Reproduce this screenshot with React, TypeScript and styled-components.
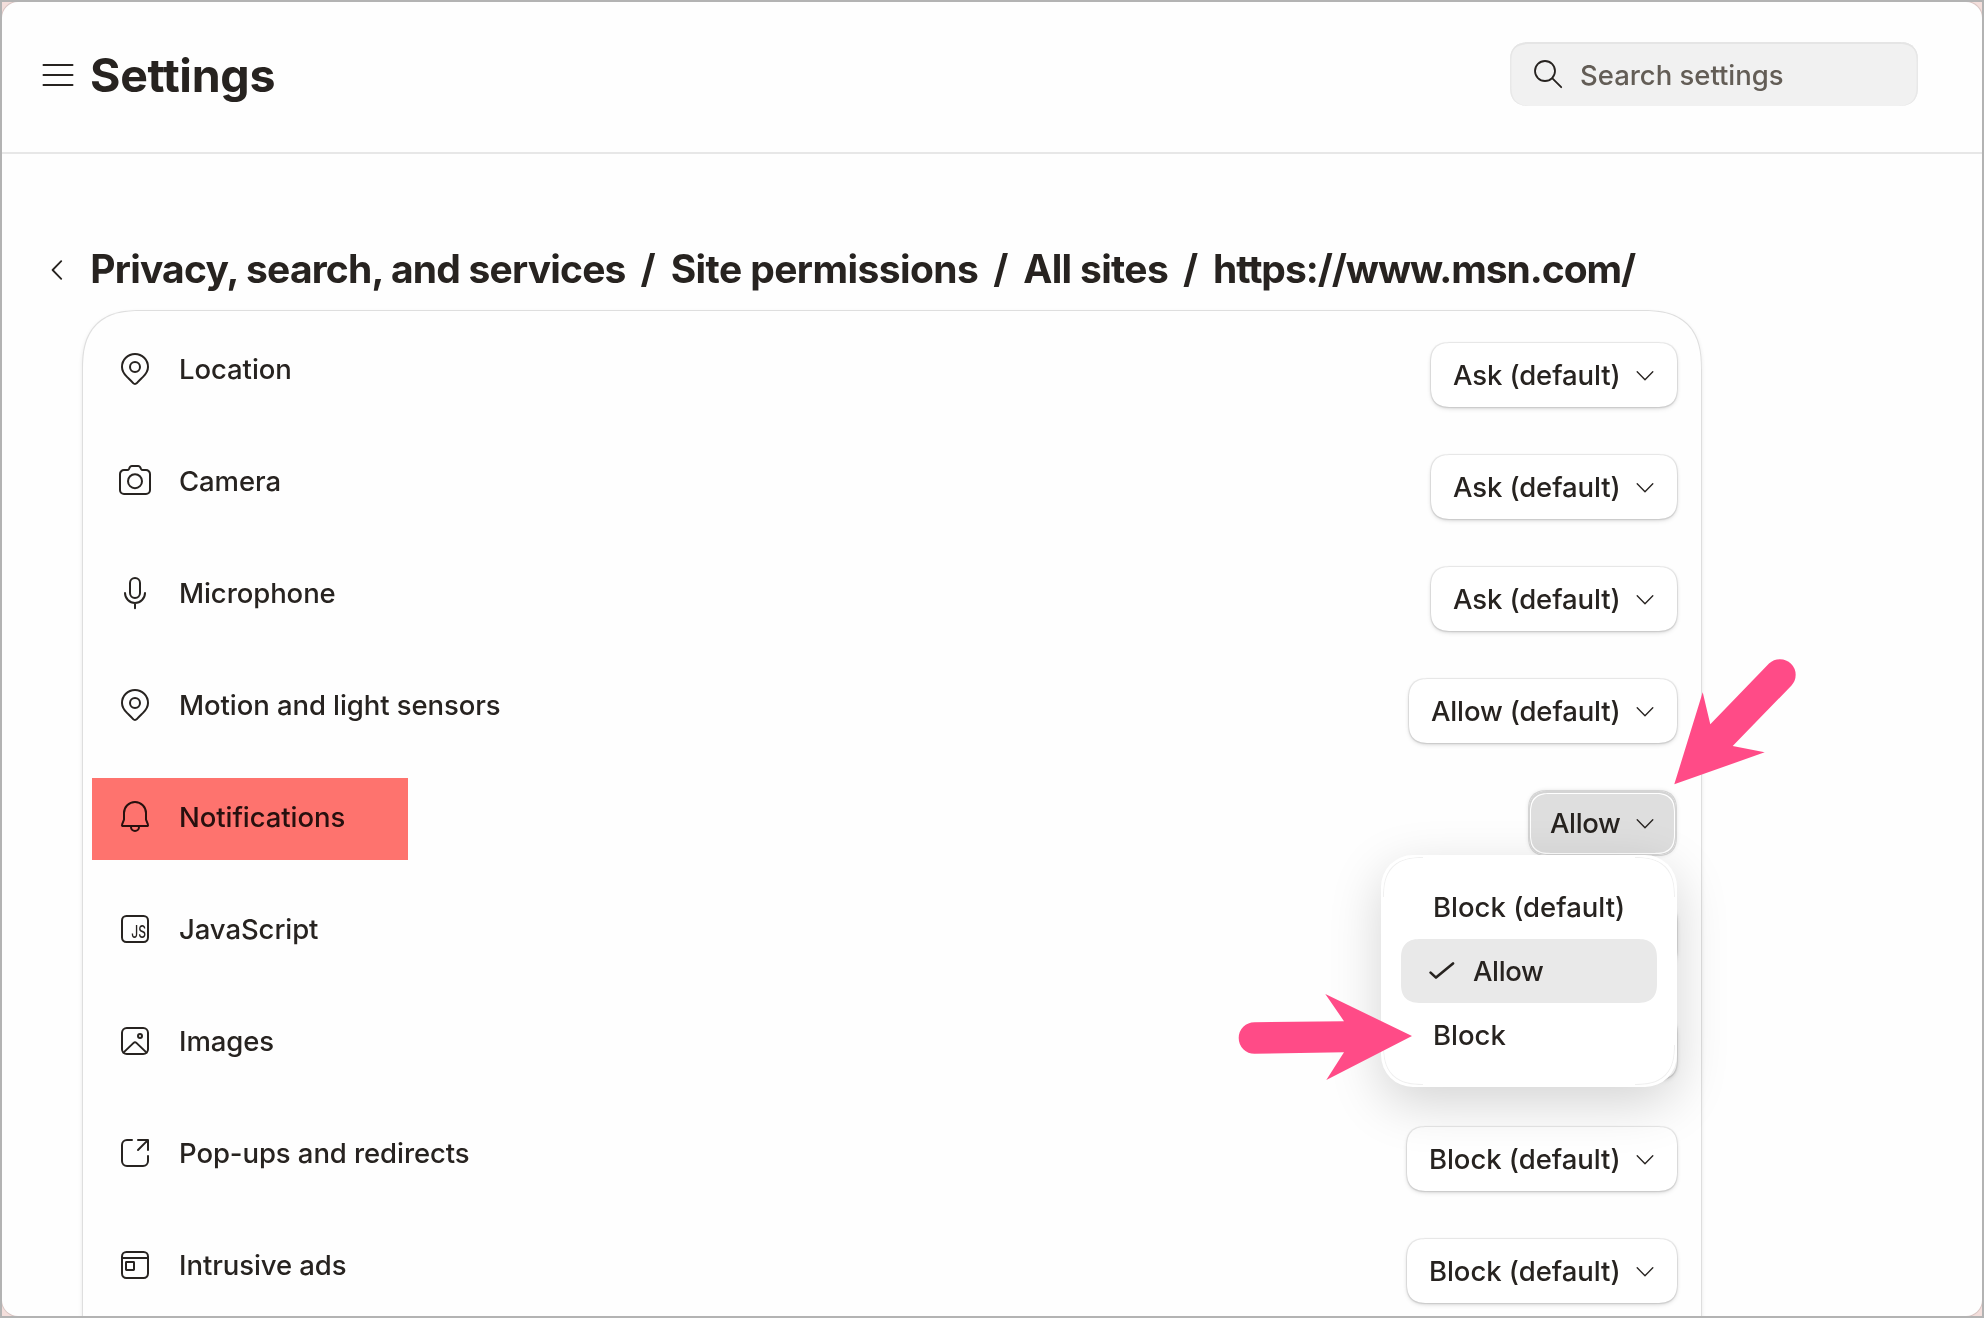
import React from 'react';
import styled, { createGlobalStyle, css } from 'styled-components';

const ink = '#272320';

const smoothCorner = css`
  corner-shape: superellipse(1.38);
`;

const GlobalStyle = createGlobalStyle`
  *, *::before, *::after { box-sizing: border-box; }
  body {
    margin: 0;
    font-family: Inter, "Liberation Sans", sans-serif;
    font-weight: 500;
    color: ${ink};
    overflow: hidden;
  }
`;

const Frame = styled.div`
  position: relative;
  width: 1984px;
  height: 1318px;
  border: 2px solid #b3b3b3;
  background: #f4dfdc;
  overflow: hidden;
`;

const Page = styled.div`
  display: flex;
  flex-direction: column;
  height: 100%;
  border-radius: 16px;
  background: #fefefe;
  box-shadow: 0 0 0 1px #d9c6c4;
  overflow: hidden;
`;

const Header = styled.header`
  flex: none;
  display: flex;
  align-items: center;
  height: 152px;
  padding: 0 64px 6px 40px;
  border-bottom: 2px solid #e7e7e7;
`;

const MenuButton = styled.div`
  flex: none;
  margin-top: 2px;
`;

const Title = styled.h1`
  flex: 1;
  margin: 1px 0 0 16px;
  font-size: 46.5px;
  font-weight: 700;
  line-height: 56px;
  letter-spacing: -0.3px;
`;

const SearchBox = styled.div`
  display: flex;
  align-items: center;
  gap: 12px;
  width: 408px;
  height: 64px;
  padding-left: 18px;
  border-radius: 20px;
  ${smoothCorner}
  background: #f1f1f1;
  box-shadow: inset 0 2px 0 #e5e5e5, inset 1.5px 0 0 #e8e8e8, inset -1.5px 0 0 #e8e8e8;
`;

const SearchText = styled.span`
  padding-top: 1px;
  font-size: 27.5px;
  letter-spacing: -0.02px;
  color: #635d56;
`;

const Stroke = styled.svg<{ $w: number; $h: number }>`
  flex: none;
  display: block;
  width: ${(p) => p.$w}px;
  height: ${(p) => p.$h}px;
  fill: none;
  stroke: currentColor;
  stroke-linecap: round;
  stroke-linejoin: round;
`;

const Breadcrumb = styled.nav`
  flex: none;
  display: flex;
  align-items: center;
  height: 48px;
  margin-top: 91px;
  padding-left: 48px;
  font-size: 39px;
  font-weight: 700;
  line-height: 48px;
`;

const Crumb = styled.span<{ $tracking: number; $first?: boolean }>`
  margin-left: ${(p) => (p.$first ? 24.3 : 0)}px;
  letter-spacing: ${(p) => p.$tracking}px;
  white-space: nowrap;
`;

const Separator = styled.span`
  width: 45px;
  text-align: center;
`;

const Card = styled.section`
  flex: none;
  width: 1620px;
  height: 1100px;
  margin: 17px 0 0 80px;
  padding: 0 25px 0 32px;
  border: 1px solid #dedede;
  border-radius: 60px;
  ${smoothCorner}
  background: #fefefe;
  box-shadow: 0 2px 4px rgba(0, 0, 0, 0.09);
`;

const Row = styled.div`
  display: flex;
  justify-content: space-between;
  align-items: flex-start;
  height: 112px;
  padding-top: 32px;
`;

const Label = styled.div<{ $marked?: boolean }>`
  position: relative;
  display: flex;
  align-items: center;
  gap: 24px;
  height: 40px;
  margin-top: 6px;
  font-size: 27.5px;
  letter-spacing: -0.08px;
  white-space: nowrap;
  ${(p) =>
    p.$marked &&
    css`
      &::after {
        content: '';
        position: absolute;
        left: -23px;
        top: -19px;
        width: 316px;
        height: 82px;
        background: #ff736e;
        mix-blend-mode: multiply;
      }
    `}
`;

const SelectWrap = styled.div`
  position: relative;
`;

const Select = styled.button<{ $open?: boolean; $tracking: number; $width?: number }>`
  display: flex;
  align-items: center;
  justify-content: flex-end;
  gap: 14.5px;
  width: ${(p) => (p.$width ? `${p.$width}px` : 'auto')};
  height: 64px;
  margin-right: ${(p) => (p.$open ? 0 : -0.5)}px;
  padding: ${(p) => (p.$open ? '0 21px' : '0 21.5px 0 22px')};
  border: 0;
  border-radius: 20px;
  ${smoothCorner}
  font: inherit;
  font-size: 27.5px;
  letter-spacing: ${(p) => p.$tracking}px;
  color: ${ink};
  white-space: nowrap;
  background: ${(p) => (p.$open ? '#dedede' : '#fff')};
  box-shadow: ${(p) =>
    p.$open
      ? '0 0 0 1px #d4d4d4, 0 0 5px rgba(0,0,0,.14), inset 0 0 0 1px #d4d4d4, inset 0 1px 0 1px #d4d4d4, inset 0 0 0 2px #fff, inset 0 1px 0 2px #fff'
      : '0 0 0 1px rgba(0,0,0,.06), 0 1px 3px rgba(0,0,0,.12), 0 2px 5px rgba(0,0,0,.1)'};
`;

const Menu = styled.div`
  position: absolute;
  z-index: 2;
  top: 64px;
  right: -1px;
  width: 296px;
  padding: 20px;
  border-radius: 32px;
  background: #fff;
  box-shadow: 0 16px 52px rgba(0, 0, 0, 0.17);
  &::after {
    content: '';
    position: absolute;
    inset: 2px;
    border: 1px solid #f0f0f0;
    border-radius: 40px;
    ${smoothCorner}
    pointer-events: none;
    mask:
      linear-gradient(#000 0 0) left top / 40px 40px no-repeat,
      linear-gradient(#000 0 0) right top / 40px 40px no-repeat,
      linear-gradient(#000 0 0) left bottom / 40px 40px no-repeat,
      linear-gradient(#000 0 0) right bottom / 40px 40px no-repeat;
  }
`;

const MenuItem = styled.div<{ $selected?: boolean; $tracking: number }>`
  display: flex;
  align-items: center;
  gap: 18.5px;
  height: 64px;
  padding-left: ${(p) => (p.$selected ? 27.5 : 32)}px;
  border-radius: 20px;
  ${smoothCorner}
  background: ${(p) => (p.$selected ? '#e9e9e9' : 'transparent')};
  font-size: 27.5px;
  letter-spacing: ${(p) => p.$tracking}px;
  white-space: nowrap;
`;

const Pointers = styled.svg`
  position: absolute;
  left: -2px;
  top: -2px;
  z-index: 3;
  width: 1984px;
  height: 1318px;
  fill: #ff4b87;
  pointer-events: none;
`;

const glyphs: Record<string, React.ReactNode> = {
  pin: (
    <>
      <path d="M10 2.5A6.5 6.5 0 0 0 3.5 9c0 1.85.95 3.4 2.5 4.95.95.95 2 1.9 3.1 3.1.5.55 1.3.55 1.8 0 1.1-1.2 2.15-2.15 3.1-3.1C15.55 12.4 16.5 10.85 16.5 9A6.5 6.5 0 0 0 10 2.5z" />
      <circle cx="10" cy="9" r="2.5" />
    </>
  ),
  camera: (
    <>
      <path d="M4.5 4.5H6.1c.4 0 .7-.2.9-.55l.4-.8c.2-.4.55-.65 1-.65h3.2c.45 0 .8.25 1 .65l.4.8c.2.35.5.55.9.55h1.6a2 2 0 0 1 2 2v8a2 2 0 0 1-2 2h-11a2 2 0 0 1-2-2v-8a2 2 0 0 1 2-2z" />
      <circle cx="10" cy="10.1" r="3.5" />
    </>
  ),
  mic: (
    <>
      <rect x="7.5" y="2.5" width="5" height="10" rx="2.5" />
      <path d="M5 10a5 5 0 0 0 10 0M10 15v2.6" />
    </>
  ),
  bell: (
    <>
      <path d="M10 2.5A5.5 5.5 0 0 0 4.5 8v3.3l-1 2.5a.5.5 0 0 0 .5.7h12a.5.5 0 0 0 .5-.7l-1-2.5V8A5.5 5.5 0 0 0 10 2.5z" />
      <path d="M8 15a2 2 0 0 0 4 0" />
    </>
  ),
  js: (
    <>
      <rect x="3.5" y="3.5" width="13" height="13" rx="2.2" />
      <text
        x="8.1"
        y="14.6"
        fontSize="8.8"
        fontFamily="Inter, sans-serif"
        fontWeight="500"
        fill="currentColor"
        stroke="none"
        letterSpacing="0"
        textLength="7.4"
        lengthAdjust="spacingAndGlyphs"
      >
        JS
      </text>
    </>
  ),
  image: (
    <>
      <rect x="3.5" y="3.5" width="13" height="13" rx="2.4" />
      <circle cx="12.5" cy="7.5" r="1" />
      <path d="M4.2 15.8l5.1-4.85a1 1 0 0 1 1.4 0l5.1 4.85" />
    </>
  ),
  popup: (
    <path d="M8.5 3.5H6A2.5 2.5 0 0 0 3.5 6v8A2.5 2.5 0 0 0 6 16.5h8a2.5 2.5 0 0 0 2.5-2.5v-2.5M11.5 3.5h5v5M16.3 3.7l-4.8 4.8" />
  ),
  ads: (
    <>
      <rect x="3.5" y="3.5" width="13" height="13" rx="2.2" />
      <path d="M3.5 6.5h13" />
      <rect x="5.5" y="8.5" width="4" height="4" rx=".2" />
    </>
  ),
};

const RowIcon = ({ name }: { name: string }) => (
  <Stroke $w={40} $h={40} viewBox="0 0 20 20" strokeWidth={1}>
    {glyphs[name]}
  </Stroke>
);

const Chevron = () => (
  <Stroke $w={20} $h={20} viewBox="0 0 20 20" strokeWidth={1.35}>
    <path d="M2.2 6.8l7.8 8 7.8-8" />
  </Stroke>
);

type Permission = {
  icon: string;
  name: string;
  value?: string;
  tracking?: number;
  open?: boolean;
};

const permissions: Permission[] = [
  { icon: 'pin', name: 'Location', value: 'Ask (default)', tracking: -0.1 },
  { icon: 'camera', name: 'Camera', value: 'Ask (default)', tracking: -0.1 },
  { icon: 'mic', name: 'Microphone', value: 'Ask (default)', tracking: -0.1 },
  { icon: 'pin', name: 'Motion and light sensors', value: 'Allow (default)', tracking: -0.14 },
  { icon: 'bell', name: 'Notifications', value: 'Allow', tracking: -0.35, open: true },
  { icon: 'js', name: 'JavaScript' },
  { icon: 'image', name: 'Images' },
  { icon: 'popup', name: 'Pop-ups and redirects', value: 'Block (default)', tracking: -0.04 },
  { icon: 'ads', name: 'Intrusive ads', value: 'Block (default)', tracking: -0.04 },
];

const OptionsMenu = () => (
  <Menu>
    <MenuItem $tracking={0}>Block (default)</MenuItem>
    <MenuItem $selected $tracking={-0.4}>
      <Stroke $w={26} $h={20} viewBox="0 0 26 20" strokeWidth={2.6}>
        <path d="M1.6 11.6l5.4 5L24 2.4" />
      </Stroke>
      Allow
    </MenuItem>
    <MenuItem $tracking={0}>Block</MenuItem>
  </Menu>
);

export default function App() {
  return (
    <>
      <GlobalStyle />
      <Frame>
        <Page>
          <Header>
            <MenuButton>
              <Stroke $w={32} $h={22} viewBox="0 0 32 22" strokeWidth={2}>
                <path d="M1.5 1h29M1.5 11h29M1.5 21h29" />
              </Stroke>
            </MenuButton>
            <Title>Settings</Title>
            <SearchBox>
              <Stroke $w={40} $h={40} viewBox="0 0 20 20" strokeWidth={0.9}>
                <circle cx="8.5" cy="8.5" r="5" />
                <path d="M12.2 12.2l4.4 4.4" />
              </Stroke>
              <SearchText>Search settings</SearchText>
            </SearchBox>
          </Header>
          <Breadcrumb>
            <Stroke $w={16} $h={22} viewBox="0 0 16 22" strokeWidth={1.8}>
              <path d="M11.2 3.2L2.6 12l8.6 8.8" />
            </Stroke>
            <Crumb $first $tracking={-0.8}>Privacy, search, and services</Crumb>
            <Separator>/</Separator>
            <Crumb $tracking={-0.58}>Site permissions</Crumb>
            <Separator>/</Separator>
            <Crumb $tracking={-0.68}>All sites</Crumb>
            <Separator>/</Separator>
            <Crumb $tracking={-1.05}>https://www.msn.com/</Crumb>
          </Breadcrumb>
          <Card>
            {permissions.map((p) => (
              <Row key={p.name}>
                <Label $marked={p.open}>
                  <RowIcon name={p.icon} />
                  {p.name}
                </Label>
                <SelectWrap>
                  <Select $open={p.open} $tracking={p.tracking ?? 0} $width={p.value ? undefined : 266}>
                    {p.value}
                    <Chevron />
                  </Select>
                  {p.open && <OptionsMenu />}
                </SelectWrap>
              </Row>
            ))}
          </Card>
        </Page>
        <Pointers viewBox="0 0 1984 1318">
          <path d="M1674.3 784.3L1702.7 692.3L1710.3 724.3L1769 663.6A15.7 15.7 0 0 1 1791.3 685.7L1732.7 746L1764.7 752.3Z" />
          <path d="M1412 1036L1325.3 994L1344 1021.2L1254.5 1022.2A15.8 15.8 0 0 0 1254.5 1053.8L1344 1052.3L1326.3 1080Z" />
        </Pointers>
      </Frame>
    </>
  );
}
